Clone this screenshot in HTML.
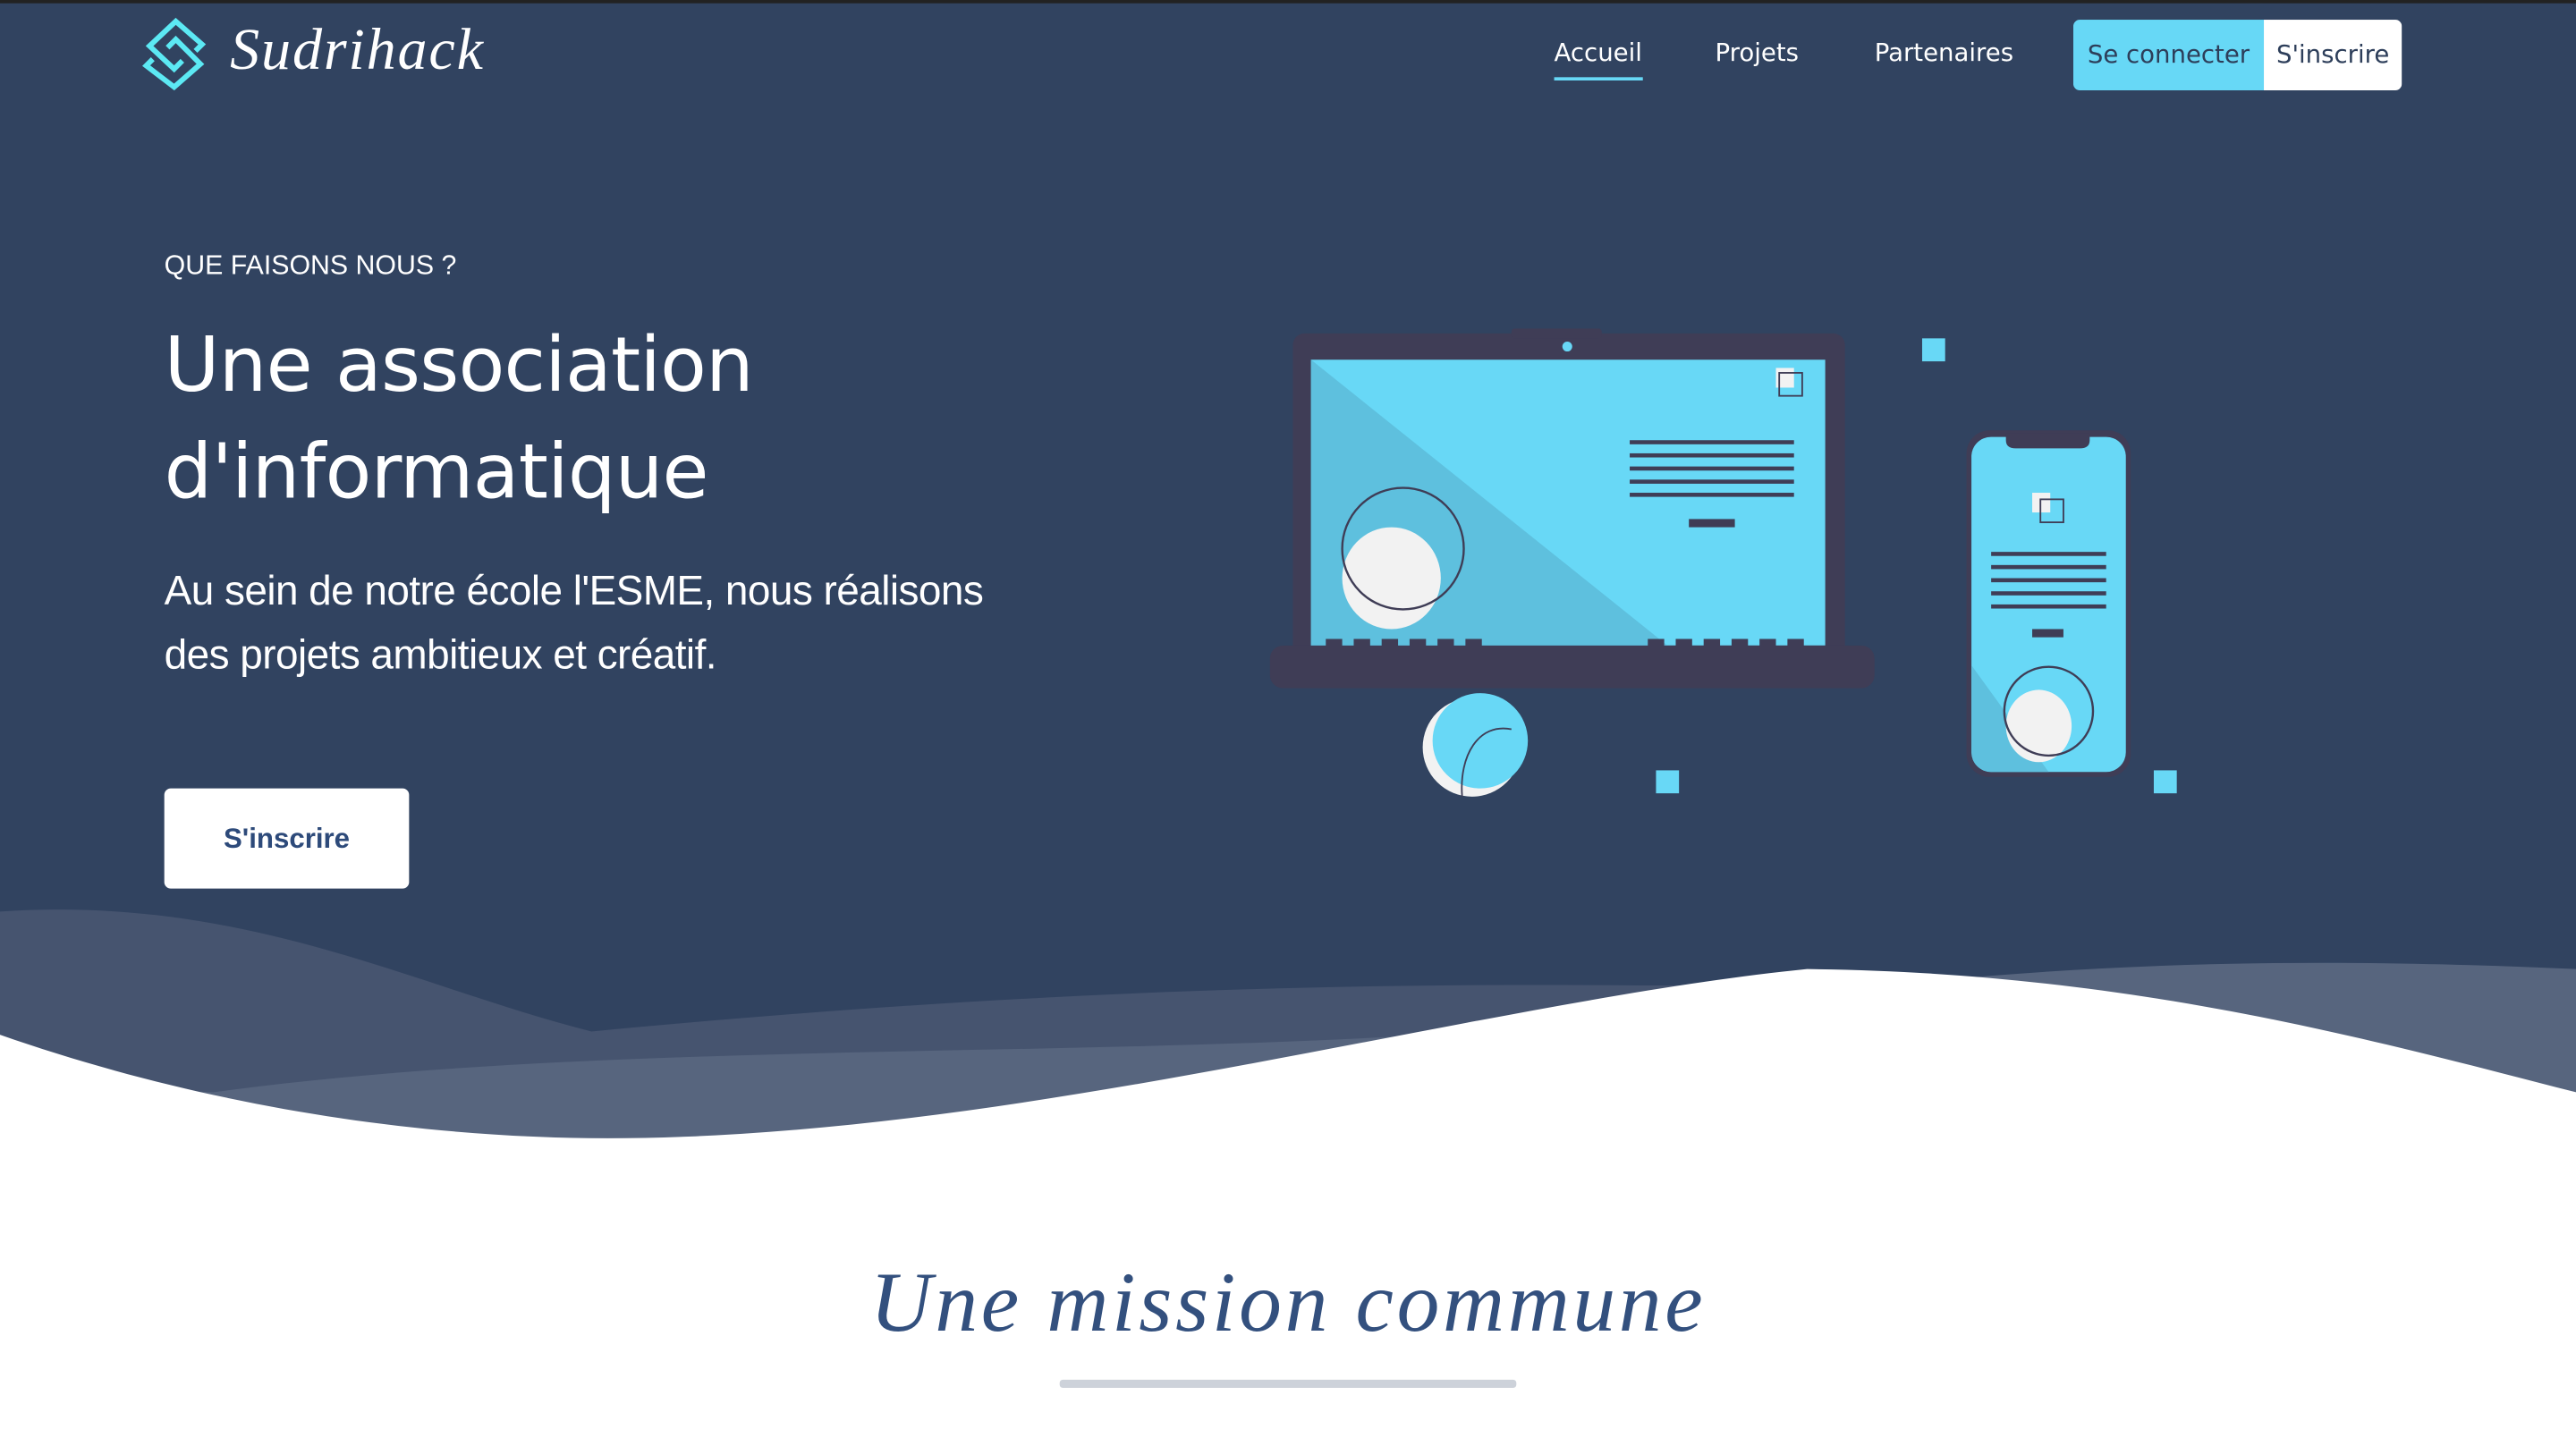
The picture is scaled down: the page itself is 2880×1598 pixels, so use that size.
<!DOCTYPE html>
<html><head><meta charset="utf-8"><style>
html,body{margin:0;padding:0;width:2880px;height:1598px;overflow:hidden;background:#fff}
#w{position:absolute;left:0;top:0;width:1568px;height:870px;transform:scale(1.836735);transform-origin:0 0;background:#fff;font-family:"Liberation Sans",sans-serif;overflow:hidden}
.hero{position:absolute;left:0;top:0;width:1568px;height:700px;background:#314360;border-top:2px solid #222}
.a{position:absolute;white-space:nowrap}
.nav{color:#fff;font-family:"DejaVu Sans",sans-serif;font-size:15px;top:23px}
</style></head><body><div id="w">
<div class="hero"></div>
<svg class="a" style="left:0;top:0" width="1568" height="870">
<defs><clipPath id="ph"><rect x="1200" y="266" width="94" height="204" rx="12"/></clipPath></defs>
<path d="M0,555 C150,545 250,600 360,628 C600,605 800,598 1000,600 L1568,600 L1568,870 L0,870Z" fill="#46546f"/>
<path d="M130,665 C400,628 750,650 1000,618 C1200,590 1350,580 1568,590 L1568,870 L0,870 L0,660Z" fill="#57657e"/>
<path d="M0,630 C120,672 250,693 370,693 C620,693 900,610 1100,590 C1300,592 1450,635 1568,665 L1568,870 L0,870Z" fill="#fff"/>
<g>
<rect x="787" y="203" width="336" height="200" rx="7" fill="#3f3d56"/>
<rect x="920" y="200" width="55" height="6" rx="2" fill="#3f3d56"/>
<rect x="798" y="219" width="313" height="174" fill="#68d8f6"/>
<path d="M798,219 L1015,393 L798,393Z" fill="#5ec0de"/>
<circle cx="954" cy="211" r="3" fill="#68d8f6"/>
<rect x="773" y="393" width="368" height="26" rx="8" fill="#3f3d56"/>
<g fill="#3f3d56"><rect x="807" y="389" width="10" height="5"/><rect x="824" y="389" width="10" height="5"/><rect x="841" y="389" width="10" height="5"/><rect x="858" y="389" width="10" height="5"/><rect x="875" y="389" width="10" height="5"/><rect x="892" y="389" width="10" height="5"/><rect x="1003" y="389" width="10" height="5"/><rect x="1020" y="389" width="10" height="5"/><rect x="1037" y="389" width="10" height="5"/><rect x="1054" y="389" width="10" height="5"/><rect x="1071" y="389" width="10" height="5"/><rect x="1088" y="389" width="10" height="5"/></g>
<g fill="#3f3d56"><rect x="992" y="268" width="100" height="2.5"/><rect x="992" y="276" width="100" height="2.5"/><rect x="992" y="284" width="100" height="2.5"/><rect x="992" y="292" width="100" height="2.5"/><rect x="992" y="300" width="100" height="2.5"/><rect x="1028" y="316" width="28" height="5"/></g>
<rect x="1081" y="224" width="11" height="12" fill="#f2f2f2"/><rect x="1083" y="227" width="14" height="14" fill="none" stroke="#3f3d56" stroke-width="1"/>
<ellipse cx="847" cy="352" rx="30" ry="31" fill="#f2f2f2"/>
<circle cx="854" cy="334" r="37" fill="none" stroke="#3f3d56" stroke-width="1.3"/>
<ellipse cx="896" cy="455" rx="30" ry="30" fill="#f2f2f2"/>
<ellipse cx="901" cy="451" rx="29" ry="29" fill="#68d8f6"/>
<path d="M890,485 C888,460 900,440 920,444" fill="none" stroke="#3f3d56" stroke-width="1"/>
<rect x="1197" y="262" width="100" height="211" rx="14" fill="#3f3d56"/>
<rect x="1200" y="266" width="94" height="204" rx="12" fill="#68d8f6"/>
<path d="M1200,405 L1294,535 L1294,480 L1200,480Z" fill="#5ec0de" clip-path="url(#ph)"/>
<path d="M1221,264 L1272,264 L1272,268 Q1272,273 1266,273 L1227,273 Q1221,273 1221,268Z" fill="#3f3d56"/>
<g fill="#3f3d56"><rect x="1212" y="336" width="70" height="2.5"/><rect x="1212" y="344" width="70" height="2.5"/><rect x="1212" y="352" width="70" height="2.5"/><rect x="1212" y="360" width="70" height="2.5"/><rect x="1212" y="368" width="70" height="2.5"/><rect x="1237" y="383" width="19" height="5"/></g>
<rect x="1237" y="300" width="11" height="12" fill="#f2f2f2"/><rect x="1242" y="304" width="14" height="14" fill="none" stroke="#3f3d56" stroke-width="1"/>
<ellipse cx="1241" cy="442" rx="20" ry="22" fill="#f2f2f2"/>
<circle cx="1247" cy="433" r="27" fill="none" stroke="#3f3d56" stroke-width="1.3"/>
<rect x="1170" y="206" width="14" height="14" fill="#68d8f6"/><rect x="1008" y="469" width="14" height="14" fill="#68d8f6"/><rect x="1311" y="469" width="14" height="14" fill="#68d8f6"/>
</g>
<g fill="none" stroke="#5ce9f4" stroke-width="3.2" transform="translate(88,12)">
<path d="M31,19 L35,15 L19,1 L3,16 L18,30 L23,25"/>
<path d="M5,24 L1,28 L18,41 L34,27 L19,12 L14,17"/>
</g>
<rect x="645" y="840" width="278" height="5" rx="2" fill="#cdd2da"/>
</svg>
<div class="a" style="left:140px;top:9px;color:#fff;font-family:'Liberation Serif',serif;font-style:italic;font-size:36px;letter-spacing:1px">Sudrihack</div>
<div class="a nav" style="left:946px">Accueil</div>
<div class="a" style="left:946px;top:47px;width:54px;height:2px;background:#67d8f6"></div>
<div class="a nav" style="left:1044px">Projets</div>
<div class="a nav" style="left:1141px">Partenaires</div>
<div class="a" style="left:1262px;top:12px;width:200px;height:43px;border-radius:4px;overflow:hidden;font-family:'DejaVu Sans',sans-serif;font-size:15px">
<div class="a" style="left:0;top:0;width:116px;height:43px;background:#67d8f6;color:#2d3e5a;line-height:42px;text-align:center">Se connecter</div>
<div class="a" style="left:116px;top:0;width:84px;height:43px;background:#fff;color:#2d3e5a;line-height:42px;text-align:center">S'inscrire</div>
</div>
<div class="a" style="left:100px;top:153px;color:#fff;font-size:16.5px">QUE FAISONS NOUS ?</div>
<div class="a" style="left:100px;top:190px;color:#fff;font-family:'DejaVu Sans',sans-serif;font-size:46px;line-height:65px;letter-spacing:-0.4px">Une association<br>d'informatique</div>
<div class="a" style="left:100px;top:341px;color:#fff;font-size:25px;line-height:39px;letter-spacing:-0.3px">Au sein de notre école l'ESME, nous réalisons<br>des projets ambitieux et créatif.</div>
<div class="a" style="left:100px;top:480px;width:149px;height:61px;background:#fff;border-radius:4px;color:#2d4a7a;font-weight:bold;font-size:17px;line-height:61px;text-align:center">S'inscrire</div>
<div class="a" style="left:0;width:1568px;top:764px;text-align:center;color:#33507e;font-family:'Liberation Serif',serif;font-style:italic;font-size:52px;letter-spacing:2px">Une mission commune</div>
</div></body></html>
